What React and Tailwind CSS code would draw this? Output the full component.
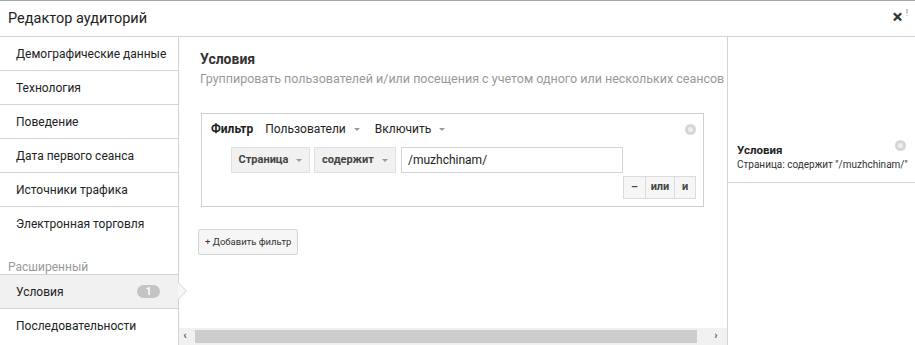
const items = [
  'Демографические данные',
  'Технология',
  'Поведение',
  'Дата первого сеанса',
  'Источники трафика',
  'Электронная торговля',
];

function Caret() {
  return <span className="ml-2 inline-block h-0 w-0 border-x-[3px] border-t-[3px] border-x-transparent border-t-[#999] align-middle" />;
}

function RemoveDot({ className = '' }) {
  return (
    <span className={`flex h-[11px] w-[11px] shrink-0 items-center justify-center rounded-full bg-[#d6d6d6] ${className}`}>
      <span className="h-[5px] w-[5px] rounded-full bg-[#eee]" />
    </span>
  );
}

export default function App() {
  return (
    <div className="flex h-[345px] w-[915px] flex-col overflow-hidden border-t border-[#a8a8a8] bg-white text-[#222]" style={{ fontFamily: 'Roboto, "Liberation Sans", sans-serif' }}>
      <div className="flex h-[36px] shrink-0 items-center justify-between border-b border-[#d4d4d4] pl-[8px] pr-[7px]">
        <span className="text-[14.5px] text-[#222]">Редактор аудиторий</span>
        <span className="mb-[5px] flex items-start gap-[3px] leading-none">
          <span className="text-[19px] font-bold text-[#333]">×</span>
          <span className="mt-[2px] text-[9px] text-[#888]">!</span>
        </span>
      </div>
      <div className="flex min-h-0 flex-1">
        <div className="flex w-[179px] shrink-0 flex-col border-r border-[#d4d4d4]">
          {items.map((t, i) => (
            <div key={t} className={`flex h-[34px] shrink-0 items-center whitespace-nowrap pl-[16px] text-[12px] ${i < 5 ? 'border-b border-[#d4d4d4]' : ''}`}>
              {t}
            </div>
          ))}
          <div className="h-[33px] shrink-0 pl-[8px] pt-[19px] text-[12px] leading-[14px] text-[#999]">Расширенный</div>
          <div className="relative flex h-[35px] shrink-0 items-center justify-between border-y border-[#d4d4d4] bg-[#f1f1f1] pl-[16px] pr-[18px] text-[12px]">
            <span>Условия</span>
            <span className="flex h-[13px] w-[23px] items-center justify-center rounded-full bg-[#c4c4c4] text-[10px] font-bold leading-none text-white">1</span>
            <span className="absolute right-[-9px] top-[8px] h-0 w-0 border-y-[8px] border-l-[8px] border-y-transparent border-l-[#d4d4d4]" />
            <span className="absolute right-[-8px] top-[8px] h-0 w-0 border-y-[8px] border-l-[8px] border-y-transparent border-l-[#f7f7f7]" />
          </div>
          <div className="flex h-[34px] shrink-0 items-center pl-[16px] text-[12px]">Последовательности</div>
        </div>
        <div className="flex w-[549px] shrink-0 flex-col border-r border-[#d4d4d4]">
          <div className="flex-1 pl-[21px] pt-[13px]">
            <div className="text-[14px] font-bold leading-[18px] text-[#333]">Условия</div>
            <div className="mt-[3px] whitespace-nowrap text-[12.5px] leading-[16px] text-[#999]">Группировать пользователей и/или посещения с учетом одного или нескольких сеансов</div>
            <div className="ml-[1px] mt-[26px] h-[94px] w-[503px] border border-[#cfcfcf] pl-[9px] pr-[7px] pt-[6px]">
              <div className="flex items-center text-[12px]">
                <span className="text-[12px] font-bold">Фильтр</span>
                <span className="ml-[12px] flex items-center">Пользователи<Caret /></span>
                <span className="ml-[15px] flex items-center">Включить<Caret /></span>
                <RemoveDot className="ml-auto" />
              </div>
              <div className="ml-[20px] mt-[9px] flex items-center gap-[4px]">
                <span className="flex h-[26px] w-[79px] items-center justify-center border border-[#e0e0e0] bg-[#f1f1f1] text-[11px] font-bold text-[#444]">Страница<Caret /></span>
                <span className="flex h-[26px] w-[82px] items-center justify-center border border-[#e0e0e0] bg-[#f1f1f1] text-[11px] font-bold text-[#444]">содержит<Caret /></span>
                <span className="ml-[1px] flex h-[26px] w-[222px] items-center border border-[#d4d4d4] pl-[6px] text-[12px]">/muzhchinam/</span>
              </div>
              <div className="mt-[3px] flex justify-end">
                <div className="flex h-[23px] border border-[#dcdcdc] bg-[#f6f6f6] text-[11px] font-bold text-[#444]">
                  <span className="flex w-[22px] items-center justify-center border-r border-[#dcdcdc]">–</span>
                  <span className="flex w-[29px] items-center justify-center border-r border-[#dcdcdc]">или</span>
                  <span className="flex w-[20px] items-center justify-center">и</span>
                </div>
              </div>
            </div>
            <button className="ml-[-2px] mt-[22px] flex h-[26px] items-center rounded-[2px] border border-[#d4d4d4] bg-[#f6f6f6] px-[6px] text-[9.5px] text-[#333]">+ Добавить фильтр</button>
          </div>
          <div className="flex h-[17px] shrink-0 items-center bg-[#f1f1f1]">
            <span className="flex w-[12px] items-center justify-center text-[11px] font-bold text-[#555]">‹</span>
            <span className="ml-[4px] mr-[14px] h-[13px] flex-1 bg-[#cdcdd0]" />
            <span className="mr-[6px] flex w-[10px] items-center justify-center text-[11px] font-bold text-[#555]">›</span>
          </div>
        </div>
        <div className="min-w-0 flex-1">
          <div className="mt-[103px] border-b border-[#d4d4d4] pb-[10px] pl-[9px] pr-[9px]">
            <div className="flex items-start justify-between">
              <span className="mt-[3px] text-[11.5px] font-bold leading-[15px] text-[#222]">Условия</span>
              <RemoveDot />
            </div>
            <div className="whitespace-nowrap text-[10px] leading-[14px] text-[#333]">Страница: содержит "/muzhchinam/"</div>
          </div>
        </div>
      </div>
    </div>
  );
}
